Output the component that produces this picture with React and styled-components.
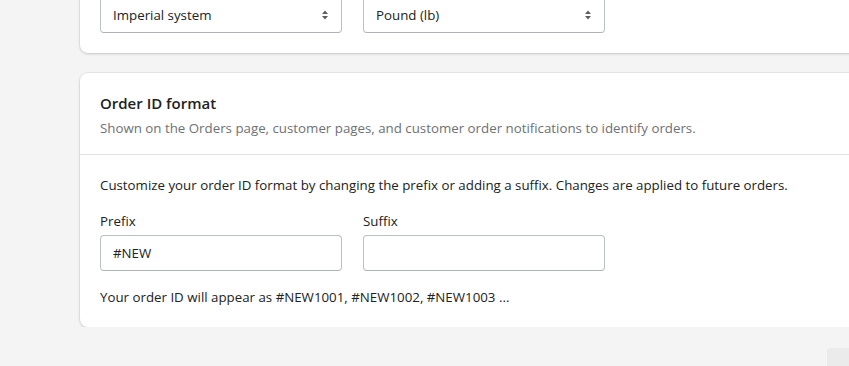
import styled, { createGlobalStyle } from 'styled-components'

const GlobalStyle = createGlobalStyle`
  body {
    margin: 0;
    background: #f4f4f4;
    font-family: "Open Sans", "Noto Sans", sans-serif;
    color: #202223;
    overflow: hidden;
  }
`;

const Page = styled.div`
  display: flex;
  flex-direction: column;
  gap: 20px;
  padding-left: 80px;
  margin-top: -23px;
  width: 820px;
`;

const Card = styled.div`
  background: #ffffff;
  border-radius: 8px;
  box-shadow: 0 0 0 1px rgba(63, 63, 68, 0.05), 0 1px 3px 0 rgba(63, 63, 68, 0.2);
`;

const Section = styled.div`
  padding: ${(p) => p.pad || '20px'};
  & + & {
    border-top: 1px solid #e1e3e5;
  }
`;

const Title = styled.h2`
  margin: 0;
  font-size: 15px;
  line-height: 20px;
  font-weight: 600;
  color: #202223;
`;

const Subtitle = styled.p`
  margin: 5px 0 0;
  font-size: 13.3px;
  line-height: 20px;
  color: #6d7175;
`;

const Text = styled.p`
  margin: ${(p) => p.margin || '0'};
  font-size: 13.3px;
  line-height: 20px;
  color: #202223;
`;

const Row = styled.div`
  display: flex;
  gap: 21px;
`;

const Field = styled.div`
  display: flex;
  flex-direction: column;
  gap: 4px;
  width: 242px;
`;

const Label = styled.label`
  font-size: 13.3px;
  line-height: 20px;
  color: #202223;
`;

const Input = styled.div`
  box-sizing: border-box;
  height: 36px;
  width: 242px;
  display: flex;
  align-items: center;
  justify-content: space-between;
  padding: 0 12px;
  border: 1px solid #babfc3;
  border-bottom-color: #aeb4b9;
  border-radius: 4px;
  background: #fff;
  font-size: 13.3px;
  color: #202223;
`;

const Arrows = () => (
  <svg width="8" height="12" viewBox="0 0 8 12">
    <path d="M4 1.5 L7 5 H1 Z M4 10.5 L1 7 H7 Z" fill="#5c5f62" />
  </svg>
);

const Corner = styled.div`
  position: fixed;
  right: 0;
  bottom: 0;
  width: 22px;
  height: 18px;
  background: #ebebeb;
  border-top-left-radius: 3px;
`;

const App = () => {
  return (
    <>
      <GlobalStyle />
      <Page>
        <Card>
          <Section>
            <Row>
              <Input>Imperial system<Arrows /></Input>
              <Input>Pound (lb)<Arrows /></Input>
            </Row>
          </Section>
        </Card>
        <Card>
          <Section pad="20px 20px 16px">
            <Title>Order ID format</Title>
            <Subtitle>Shown on the Orders page, customer pages, and customer order notifications to identify orders.</Subtitle>
          </Section>
          <Section pad="20px 20px 20px">
            <Text margin="0 0 16px">Customize your order ID format by changing the prefix or adding a suffix. Changes are applied to future orders.</Text>
            <Row>
              <Field>
                <Label>Prefix</Label>
                <Input>#NEW</Input>
              </Field>
              <Field>
                <Label>Suffix</Label>
                <Input></Input>
              </Field>
            </Row>
            <Text margin="16px 0 0">Your order ID will appear as #NEW1001, #NEW1002, #NEW1003 ...</Text>
          </Section>
        </Card>
      </Page>
      <Corner />
    </>
  )
};

export default App;
